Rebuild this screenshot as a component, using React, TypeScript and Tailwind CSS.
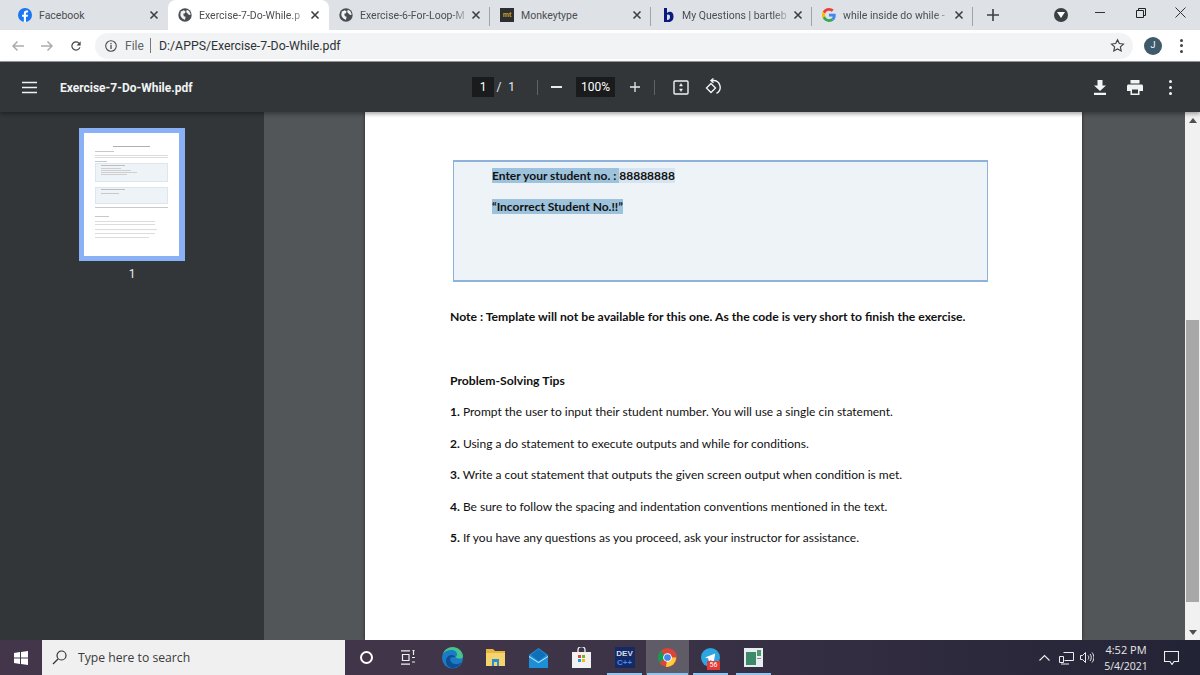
import React from "react";

const Globe = () => (
  <svg width="14" height="14" viewBox="0 0 24 24" className="shrink-0">
    <circle cx="12" cy="12" r="11.500" fill="#4a4d51" />
    <path d="M5 6l5-2 3 2-1 3-3 1 1 4 3 1-1 5c-4-1-8-5-8-9 0-2 1-4 1-6zM15 3l4 2 3 6-3 1-3-3-2-2z" fill="#f4f4f4" />
  </svg>
);
const Fb = () => (
  <svg width="14" height="14" viewBox="0 0 24 24" className="shrink-0">
    <circle cx="12" cy="12" r="12" fill="#1877f2" />
    <path d="M13.600 24v-9h3l.6-3.600h-3.600V9.300c0-1 .4-1.800 1.900-1.800h1.800V4.300c-.6-.1-1.600-.2-2.700-.2-2.800 0-4.600 1.600-4.600 4.700v2.600H7v3.600h3v9z" fill="#fff" />
  </svg>
);
const Mt = () => (
  <div className="w-[14px] h-[14px] bg-[#2c2e31] shrink-0 flex items-center justify-center text-[7px] font-bold text-[#c9a227] font-['Liberation_Sans',sans-serif]">mt</div>
);
const B = () => (
  <svg width="14" height="16" viewBox="0 0 14 16" className="shrink-0">
    <path d="M3 1h3v5c1-1 2-1.300 3-1.300 2.200 0 3.500 2 3.500 4.800 0 3.200-1.800 5.500-4.500 5.500H3zM6 8v5c1.500.3 3-.5 3-3.200C9 7.500 7.500 7 6 8z" fill="#0b1a80" fillRule="evenodd" />
  </svg>
);
const G = () => (
  <svg width="14" height="14" viewBox="0 0 48 48" className="shrink-0">
    <path fill="#EA4335" d="M24 9.500c3.500 0 6.700 1.200 9.200 3.600l6.900-6.900C35.900 2.400 30.500 0 24 0 14.600 0 6.500 5.400 2.600 13.200l8 6.200C12.400 13.700 17.700 9.500 24 9.500z" />
    <path fill="#4285F4" d="M47 24.500c0-1.600-.1-3.100-.4-4.500H24v9h12.900c-.6 3-2.200 5.500-4.700 7.200l7.700 6C44.400 38 47 31.800 47 24.500z" />
    <path fill="#FBBC05" d="M10.500 28.600A14.500 14.500 0 0 1 10.500 19.400l-8-6.200a24 24 0 0 0 0 21.600z" />
    <path fill="#34A853" d="M24 48c6.500 0 11.900-2.100 15.900-5.800l-7.700-6c-2.200 1.500-4.900 2.300-8.200 2.300-6.300 0-11.600-4.200-13.500-10l-8 6.200C6.500 42.600 14.600 48 24 48z" />
  </svg>
);

const X = () => (
  <svg width="10" height="10" viewBox="0 0 10 10" className="shrink-0">
    <path d="M1.500 1.500l7 7M8.500 1.500l-7 7" stroke="#3c4043" strokeWidth="1.600" />
  </svg>
);

function Tab({ w, icon, title, active, sep, fade }: { w: number; icon: React.ReactNode; title: string; active?: boolean; sep?: boolean; fade?: boolean }) {
  return (
    <div
      style={{ width: w }}
      className={`h-[30px] shrink-0 flex items-center pl-[10px] pr-[9px] relative ${active ? "bg-white rounded-t-[8px]" : ""}`}
    >
      {icon}
      <span
        className={`ml-[7px] flex-1 min-w-0 mt-[1px] whitespace-nowrap text-[10.500px] text-[#4b4e52] font-['Roboto',sans-serif] ${fade ? "[mask-image:linear-gradient(to_right,black_82%,transparent_100%)]" : ""}`}
      >
        {title}
      </span>
      <X />
      {sep && <div className="absolute right-0 top-[7px] w-px h-[19px] bg-[#a0a3a7]" />}
    </div>
  );
}

function PdfLine({ n, children, last }: { n: string; children: React.ReactNode; last?: boolean }) {
  return (
    <p className={`text-[12px] leading-[15px] font-normal text-[#111] ${last ? "" : "mb-[16.400px]"}`}>
      <span className="font-bold">{n}</span> {children}
    </p>
  );
}

const L = ({ w, c = "bg-[#dcdcdc]", m = "mt-[2px]" }: { w: string; c?: string; m?: string }) => <div className={`h-px ${w} ${c} ${m}`} />;

const Thumb = () => (
  <div className="w-[106px] h-[133px] bg-[#8ab0f5] pl-[5px] pr-[6px] py-[5px]">
    <div className="w-full h-full bg-white pt-[13px] pl-[11px] pr-[11px] blur-[0.4px]">
      <div className="h-px w-[37px] ml-[18px] bg-[#b0b0b0]" />
      <L w="w-[19px]" m="mt-[4px]" c="bg-[#c8c8c8]" />
      <L w="w-full" m="mt-[3px]" />
      <L w="w-full" m="mt-[1px]" />
      <L w="w-[12px]" m="mt-[3px]" c="bg-[#c8c8c8]" />
      <div className="h-[19px] mt-[1px] bg-[#eef3f7] border border-[#dbe6f1] pl-[5px] pt-[1px]">
        <L w="w-[24px]" m="" c="bg-[#bdbdbd]" />
        <L w="w-[20px]" m="mt-[2px]" c="bg-[#cfcfcf]" />
        <L w="w-[30px]" m="mt-[1px]" c="bg-[#cfcfcf]" />
        <L w="w-[36px]" m="mt-[1px]" c="bg-[#cfcfcf]" />
        <L w="w-[26px]" m="mt-[1px]" c="bg-[#cfcfcf]" />
      </div>
      <div className="h-[17px] mt-[5px] bg-[#eef3f7] border border-[#dbe6f1] pl-[5px] pt-[1px]">
        <L w="w-[24px]" m="" c="bg-[#bdbdbd]" />
        <L w="w-[18px]" m="mt-[3px]" c="bg-[#c8c8c8]" />
      </div>
      <L w="w-full" m="mt-[3px]" c="bg-[#c8c8c8]" />
      <L w="w-[14px]" m="mt-[8px]" c="bg-[#c8c8c8]" />
      <L w="w-[60px]" m="mt-[4px]" />
      <L w="w-[60px]" m="mt-[2px]" />
      <L w="w-[62px]" m="mt-[4px]" />
      <L w="w-[60px]" m="mt-[3px]" />
      <L w="w-[54px]" m="mt-[3px]" />
    </div>
  </div>
);

function Cell({ children, line, hot }: { children: React.ReactNode; line?: boolean; hot?: boolean }) {
  return (
    <div className={`w-[43px] h-[35px] shrink-0 flex items-center justify-center relative ${hot ? "bg-[#5f5b67]" : ""}`}>
      {children}
      {line && <div className={`absolute bottom-0 h-[2px] bg-[#8ec6f0] ${hot ? "inset-x-[1px]" : "inset-x-[4px]"}`} />}
    </div>
  );
}

export default function App() {
  return (
    <div className="w-[1200px] h-[675px] flex flex-col overflow-hidden font-['Roboto',sans-serif] bg-[#323639]">
      {/* tab strip */}
      <div className="h-[30px] shrink-0 bg-[#dee1e6] flex items-center pl-[8px]">
        <Tab w={160} icon={<Fb />} title="Facebook" />
        <Tab w={161} icon={<Globe />} title="Exercise-7-Do-While.p" active fade />
        <Tab w={161} icon={<Globe />} title="Exercise-6-For-Loop-M" sep fade />
        <Tab w={161} icon={<Mt />} title="Monkeytype" sep />
        <Tab w={161} icon={<B />} title="My Questions | bartleb" sep fade />
        <Tab w={161} icon={<G />} title="while inside do while -" sep fade />
        <div className="w-[39px] flex items-center justify-center shrink-0">
          <svg width="12" height="12" viewBox="0 0 12 12"><path d="M6 0v12M0 6h12" stroke="#3c4043" strokeWidth="1.600" /></svg>
        </div>
        <div className="w-[14px] h-[14px] rounded-full bg-[#3c4043] flex items-center justify-center ml-[42px] shrink-0">
          <svg width="8" height="6" viewBox="0 0 8 6"><path d="M0 0h8L4 6z" fill="#fff" /></svg>
        </div>
        <div className="w-[41px] flex justify-center ml-[11px] -mt-[5px] shrink-0">
          <div className="w-[10px] h-px bg-[#333]" />
        </div>
        <div className="w-[41px] flex justify-center -mt-[5px] shrink-0">
          <svg width="10" height="10" viewBox="0 0 10 10" fill="none" stroke="#222"><path d="M.500 2.500h7v7h-7zM2.500 2.500v-2h7v7h-2" /></svg>
        </div>
        <div className="w-[39px] flex justify-center -mt-[5px] shrink-0">
          <svg width="11" height="11" viewBox="0 0 11 11" stroke="#333"><path d="M.500.500l10 10M10.500.500l-10 10" /></svg>
        </div>
      </div>

      {/* address bar */}
      <div className="h-[32px] shrink-0 bg-white flex items-center border-b border-[#9a9c9f]">
        <div className="w-[95px] pl-[11px] flex items-center gap-[15px] shrink-0">
          <svg width="14" height="14" viewBox="0 0 14 14" fill="none" stroke="#a9acb0" strokeWidth="1.500"><path d="M13 7H2M6.500 2.500L2 7l4.500 4.500" /></svg>
          <svg width="14" height="14" viewBox="0 0 14 14" fill="none" stroke="#a9acb0" strokeWidth="1.500"><path d="M1 7h11M7.500 2.500L12 7l-4.500 4.500" /></svg>
          <svg width="14" height="14" viewBox="0 0 24 24" fill="#44474b"><path d="M17.650 6.350A8 8 0 1 0 19.730 14h-2.080a6 6 0 1 1-1.410-6.240L13 11h7V4z" /></svg>
        </div>
        <div className="w-[1038px] h-[26px] rounded-full bg-[#f1f3f4] flex items-center pl-[10px] shrink-0">
          <svg width="12" height="12" viewBox="0 0 12 12" fill="none" stroke="#4a4d51" className="shrink-0">
            <circle cx="6" cy="6" r="5.300" strokeWidth="1.100" />
            <path d="M6 5v4M6 3v1.200" strokeWidth="1.300" />
          </svg>
          <span className="ml-[8px] mt-[1px] w-[18px] text-[12px] text-[#5f6368]">File</span>
          <div className="w-px h-[15px] bg-[#777] ml-[7px] mr-[8px]" />
          <span className="mt-[1px] text-[12.300px] text-[#303134]">D:/APPS/Exercise-7-Do-While.pdf</span>
          <svg width="15" height="15" viewBox="0 0 24 24" fill="none" stroke="#3c4043" strokeWidth="1.800" className="ml-auto mr-[8px] shrink-0">
            <path d="M12 2.800l2.900 6.100 6.600.8-4.900 4.500 1.300 6.600L12 17.500l-5.900 3.300 1.300-6.600L2.500 9.700l6.600-.8z" />
          </svg>
        </div>
        <div className="ml-[11px] w-[18px] h-[18px] rounded-full bg-[#3e5a6b] text-white text-[9px] flex items-center justify-center shrink-0">J</div>
        <div className="ml-[18px] flex flex-col gap-[2.500px] shrink-0">
          <div className="w-[3px] h-[3px] rounded-full bg-[#444]" />
          <div className="w-[3px] h-[3px] rounded-full bg-[#444]" />
          <div className="w-[3px] h-[3px] rounded-full bg-[#444]" />
        </div>
      </div>

      {/* pdf toolbar */}
      <div className="h-[50px] shrink-0 bg-[#323639] flex items-center text-white relative shadow-[0_2px_4px_rgba(0,0,0,0.35)] z-10">
        <svg width="16" height="13" viewBox="0 0 16 13" className="ml-[22px] shrink-0" stroke="#f1f1f1" strokeWidth="1.500"><path d="M0 1.500h15M0 6.500h15M0 11.500h15" /></svg>
        <span className="ml-[22px] w-[412px] mt-[1px] text-[12px] font-bold text-[#f1f3f4] shrink-0">Exercise-7-Do-While.pdf</span>
        <div className="w-[22px] h-[20px] bg-[#191b1c] text-[12px] flex items-center justify-center shrink-0">1</div>
        <span className="w-[10px] text-center text-[12px] text-[#e8eaed] shrink-0">/</span>
        <span className="w-[15px] text-center text-[12px] text-[#e8eaed] shrink-0">1</span>
        <div className="ml-[18px] w-px h-[15px] bg-[#5f6367] shrink-0" />
        <div className="ml-[13px] w-[11px] h-[2px] bg-[#e8eaed] shrink-0" />
        <div className="ml-[14px] w-[39px] h-[20px] bg-[#191b1c] text-[12px] flex items-center justify-center shrink-0">100%</div>
        <svg width="12" height="12" viewBox="0 0 12 12" className="ml-[13.500px] shrink-0" stroke="#e8eaed" strokeWidth="1.300"><path d="M6 1v10M1 6h10" /></svg>
        <div className="ml-[13.500px] w-px h-[15px] bg-[#5f6367] shrink-0" />
        <svg width="16" height="15" viewBox="0 0 16 15" className="ml-[18px] shrink-0" fill="none" stroke="#f1f3f4" strokeWidth="1.400">
          <rect x="1" y="1" width="14" height="13" rx="1" />
          <path d="M8 3.500L6.500 6h3zM8 11.500L6.500 9h3z" fill="#f1f3f4" strokeWidth="0.500" />
        </svg>
        <svg width="17" height="18" viewBox="0 0 17 18" className="ml-[15px] shrink-0" fill="none" stroke="#f1f3f4" strokeWidth="1.400">
          <path d="M2.500 10l4.500-4.500 4.500 4.500-4.500 4.500z" />
          <path d="M7.500 2.500h1.500a6.800 6.800 0 0 1 3.500 12.800" />
          <path d="M9.500.500L7 2.500l2.500 2.300" />
        </svg>
        <svg width="14" height="15" viewBox="0 0 14 15" className="ml-[372px] shrink-0" fill="#f1f3f4"><path d="M4.500 0h5v5.500H13L7 11 1 5.500h3.500zM1 12.800h12V15H1z" /></svg>
        <svg width="16" height="15" viewBox="0 0 16 15" className="ml-[20px] shrink-0" fill="#f1f3f4"><path d="M3.500 0h9v3.500h-9zM1.500 4.500h13c.8 0 1.500.7 1.500 1.500v5h-3.500v4h-9v-4H0V6c0-.8.7-1.500 1.500-1.500zM5 9.500v4h6v-4z" fillRule="evenodd" /></svg>
        <div className="ml-[26px] flex flex-col gap-[3px] shrink-0">
          <div className="w-[3px] h-[3px] rounded-full bg-[#f1f3f4]" />
          <div className="w-[3px] h-[3px] rounded-full bg-[#f1f3f4]" />
          <div className="w-[3px] h-[3px] rounded-full bg-[#f1f3f4]" />
        </div>
      </div>

      {/* main */}
      <div className="h-[528px] shrink-0 flex overflow-hidden">
        <aside className="w-[264px] shrink-0 bg-[#323639] flex flex-col pt-[16px] pl-[79px]">
          <Thumb />
          <span className="mt-[4px] w-[106px] text-center text-[12px] text-[#e8eaed]">1</span>
        </aside>
        <div className="w-[921px] shrink-0 bg-[#525659] pl-[101px]">
          <div className="w-[717px] h-full bg-white shadow-[0_0_3px_rgba(0,0,0,0.6)] pl-[85px] pt-[48px] font-['Lato','Open_Sans',sans-serif]">
            <div className="w-[535px] h-[122px] ml-[3px] bg-[#eef3f8] border-y-2 border-x border-[#8db3dc] pl-[38px] pt-[6px]">
              <p className="text-[12px] leading-[15px] font-bold text-[#111]">
                <span className="bg-[#9dc2dc]">Enter your student no. : </span>
                <span className="bg-[#d5e4f0]">88888888</span>
              </p>
              <p className="mt-[16px] text-[12px] leading-[15px] font-bold text-[#111]">
                <span className="bg-[#9dc2dc]">“Incorrect Student No.!!”</span>
              </p>
            </div>
            <p className="mt-[27px] text-[12.200px] leading-[15px] font-bold text-[#111]">
              Note : Template will not be available for this one. As the code is very short to finish the exercise.
            </p>
            <p className="mt-[49px] mb-[16.400px] text-[12.200px] leading-[15px] font-bold text-[#111]">Problem-Solving Tips</p>
            <PdfLine n="1.">Prompt the user to input their student number. You will use a single cin statement.</PdfLine>
            <PdfLine n="2.">Using a do statement to execute outputs and while for conditions.</PdfLine>
            <PdfLine n="3.">Write a cout statement that outputs the given screen output when condition is met.</PdfLine>
            <PdfLine n="4.">Be sure to follow the spacing and indentation conventions mentioned in the text.</PdfLine>
            <PdfLine n="5." last>If you have any questions as you proceed, ask your instructor for assistance.</PdfLine>
          </div>
        </div>
        <div className="w-[15px] shrink-0 bg-[#f1f1f1] flex flex-col items-center">
          <div className="h-[16px] flex items-center justify-center shrink-0">
            <svg width="8" height="5" viewBox="0 0 8 5"><path d="M0 5l4-5 4 5z" fill="#505050" /></svg>
          </div>
          <div className="w-[13px] h-[282px] mt-[192px] bg-[#a8a8a8] shrink-0" />
          <div className="mt-auto h-[16px] flex items-center justify-center shrink-0">
            <svg width="8" height="5" viewBox="0 0 8 5"><path d="M0 0l4 5 4-5z" fill="#505050" /></svg>
          </div>
        </div>
      </div>

      {/* taskbar */}
      <div className="h-[35px] shrink-0 bg-gradient-to-r from-[#43364a] via-[#3e3448] to-[#232336] flex items-center">
        <div className="w-[42px] flex justify-center shrink-0">
          <svg width="14" height="14" viewBox="0 0 14 14" fill="#fff"><path d="M0 2l6-.9V6.500H0zM7 1l7-1v6.500H7zM0 7.500h6v5.400l-6-.9zM7 7.500h7V14l-7-1z" /></svg>
        </div>
        <div className="w-[303px] h-[35px] bg-[#f0f0f0] flex items-center pl-[10px] shrink-0">
          <svg width="15" height="15" viewBox="0 0 15 15" fill="none" stroke="#333" strokeWidth="1.200"><circle cx="9.500" cy="5.500" r="4.500" /><path d="M6 9l-5 5" /></svg>
          <span className="ml-[11px] mt-[1px] text-[12.200px] text-[#3a3a3a] font-['Open_Sans',sans-serif]">Type here to search</span>
        </div>
        <div className="w-[42px] flex justify-center shrink-0">
          <div className="w-[13px] h-[13px] rounded-full border-[2px] border-white" />
        </div>
        <div className="w-[42px] flex justify-center shrink-0">
          <svg width="15" height="15" viewBox="0 0 15 15" fill="none" stroke="#eee" strokeWidth="1.200">
            <path d="M0 .800h9M0 14.200h9M1.500 4.500h6.500v6H1.500zM12.500 0v5M11 0h3M11 7.500h3M11 12h3" />
          </svg>
        </div>
        <div className="w-[2px] shrink-0" />
        <Cell>
          <svg width="21" height="22" viewBox="0 0 21 22">
            <circle cx="10.500" cy="11" r="10.500" fill="#1b7bc6" />
            <path d="M21 10c0-6-5-10-10.500-10C6 0 2 3 1 7c2-3 5-4 8-4 4 0 6 2 6 4.500 0 1-.5 2-1.500 2.800 2 2 7 1.500 7.500-.3z" fill="#45c58b" />
            <path d="M4 14c0-4 3-6 6-6 2 0 3 1 3 2.300H9c-1 1-1.500 4 1.500 6 3 1.500 7 1 9-1.300-1.500 3.500-5 6-9 6C6 21 4 17 4 14z" fill="#0e4f93" />
          </svg>
        </Cell>
        <Cell>
          <svg width="19" height="17" viewBox="0 0 19 17">
            <path d="M0 0h7l2 2h10v15H0z" fill="#e8b53e" />
            <path d="M0 4h19v13H0z" fill="#f5d36d" />
            <path d="M6 10h7v7H6z" fill="#2a8fd0" />
            <path d="M8 13h3v4H8z" fill="#f5d36d" />
          </svg>
        </Cell>
        <Cell>
          <svg width="19" height="20" viewBox="0 0 19 20">
            <path d="M0 7L9.500 0 19 7v13H0z" fill="#1b8fd8" />
            <path d="M0 8l9.500 6L19 8v1l-9.500 6L0 9z" fill="#d2effc" />
            <path d="M2 7l7.500-6L17 7l-7.500 6z" fill="#0f6fb7" />
          </svg>
        </Cell>
        <Cell>
          <svg width="19" height="22" viewBox="0 0 19 22">
            <path d="M6 6V3a3 3 0 0 1 7 0v3" fill="none" stroke="#f2f2f2" strokeWidth="1.300" />
            <rect y="5" width="19" height="16" fill="#f2f2f2" />
            <rect x="6" y="8" width="3" height="3" fill="#e24a2a" />
            <rect x="10" y="8" width="3" height="3" fill="#7db32a" />
            <rect x="6" y="12" width="3" height="3" fill="#1f9be0" />
            <rect x="10" y="12" width="3" height="3" fill="#f2b90f" />
          </svg>
        </Cell>
        <Cell line>
          <div className="w-[20px] h-[21px] bg-[#142a66] flex flex-col items-center justify-center leading-[9px] font-bold text-[8px] font-['Liberation_Sans',sans-serif]">
            <span className="text-[#d8dce8]">DEV</span>
            <span className="text-[#4a8ae8]">C++</span>
          </div>
        </Cell>
        <Cell line hot>
          <svg width="19" height="19" viewBox="0 0 48 48">
            <circle cx="24" cy="24" r="24" fill="#db4437" />
            <path d="M24 24L3.500 36.500A24 24 0 0 1 8 6l10 18z" fill="#0f9d58" />
            <path d="M24 24h22A24 24 0 0 1 20 47.700z" fill="#ffcd40" />
            <circle cx="24" cy="24" r="11" fill="#fff" />
            <circle cx="24" cy="24" r="8.500" fill="#4285f4" />
          </svg>
        </Cell>
        <Cell line>
          <svg width="19" height="19" viewBox="0 0 24 24">
            <circle cx="12" cy="12" r="12" fill="#2ca5e0" />
            <path d="M5 12l13-5-2 11-4-3-2 2-1-4z" fill="#fff" />
          </svg>
          <div className="absolute left-[18px] top-[21px] w-[13px] h-[9px] bg-[#e53935] text-white text-[7px] leading-[9px] text-center">56</div>
        </Cell>
        <Cell line>
          <svg width="19" height="19" viewBox="0 0 19 19">
            <rect width="19" height="19" fill="#e8eef0" />
            <rect x="2" y="4" width="10" height="13" fill="#3c8a6a" />
            <rect x="13" y="2" width="4" height="6" fill="#4a9a70" />
            <rect x="13" y="10" width="4" height="1" fill="#888" />
          </svg>
        </Cell>

        {/* tray */}
        <div className="ml-auto flex items-center pr-[12px] shrink-0">
          <div className="w-[22px] flex justify-center">
            <svg width="11" height="7" viewBox="0 0 11 7" fill="none" stroke="#eee" strokeWidth="1.100"><path d="M.500 6.500l5-5 5 5" /></svg>
          </div>
          <div className="w-[22px] flex justify-center">
            <svg width="15" height="14" viewBox="0 0 15 14" fill="none" stroke="#eee" strokeWidth="1">
              <path d="M4.500 1.500h10v8h-9M.500 5.500h4v6h-4zM2 13h8" />
            </svg>
          </div>
          <div className="w-[20px] flex justify-center">
            <svg width="14" height="13" viewBox="0 0 14 13" fill="none" stroke="#eee" strokeWidth="1">
              <path d="M.500 4.500h2l3-3v10l-3-3h-2zM8 4.500c1 1 1 3 0 4M10 3c1.700 2 1.700 5 0 7M12 1.500c2.500 3 2.500 7 0 10" />
            </svg>
          </div>
          <div className="w-[58px] flex flex-col items-center text-[#e8e8e8] text-[11px] leading-[17px] font-['Open_Sans',sans-serif]">
            <span>4:52 PM</span>
            <span className="text-[10.500px]">5/4/2021</span>
          </div>
          <div className="w-[33px] flex justify-center">
            <svg width="15" height="14" viewBox="0 0 15 14" fill="none" stroke="#eee" strokeWidth="1.100"><path d="M.500.500h14v10H10l-2 3-2-3H.500z" /></svg>
          </div>
        </div>
      </div>
    </div>
  );
}
